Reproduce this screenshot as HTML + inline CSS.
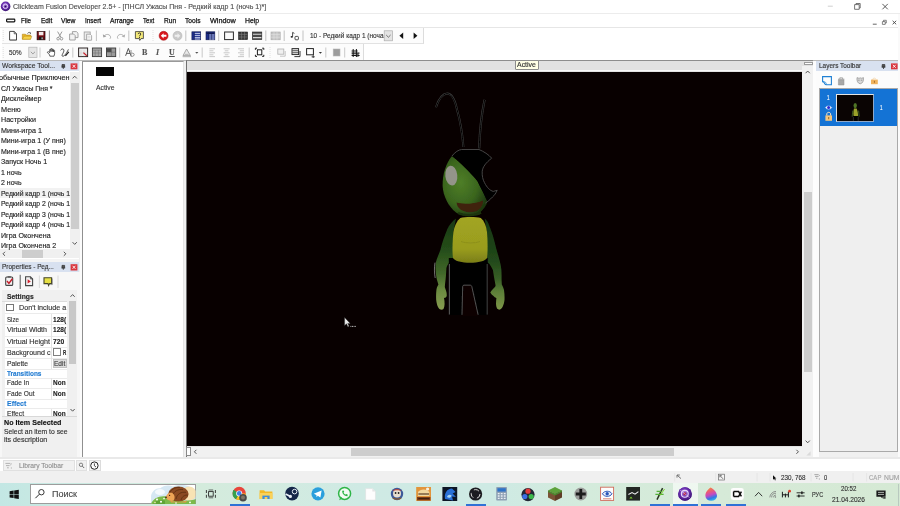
<!DOCTYPE html>
<html><head><meta charset="utf-8">
<style>
*{box-sizing:border-box;margin:0;padding:0}
html,body{width:900px;height:506px;overflow:hidden;background:#fff}
body{font-family:"Liberation Sans",sans-serif;font-size:7px;color:#222;position:relative}
.a{position:absolute}
.t{position:absolute;white-space:nowrap;transform-origin:0 50%;-webkit-text-stroke:0.14px currentColor}
#blur{position:absolute;left:0;top:0;width:900px;height:506px;filter:blur(0.4px)}
svg{position:absolute;overflow:visible}
.sep{position:absolute;width:1px;background:#c4c4c4}
</style></head><body>
<div id="blur">
<!-- ===== title / menu / toolbars ===== -->
<div class="a" style="left:0;top:0;width:900px;height:61px;background:#fff"></div>
<div class="a" style="left:0;top:13px;width:900px;height:1px;background:#ececec"></div>
<div class="a" style="left:0;top:27px;width:900px;height:1px;background:#e6e6e6"></div>
<div class="a" style="left:2px;top:28px;width:422px;height:16px;background:#fcfcfc;border-right:1px solid #dcdcdc;border-bottom:1px solid #e2e2e2"></div>
<div class="a" style="left:2px;top:44px;width:361.6px;height:16px;background:#fcfcfc;border-right:1px solid #dcdcdc"></div>
<!-- ===== main background ===== -->
<div class="a" style="left:0;top:60px;width:900px;height:399px;background:#f0f0f0"></div>
<div class="a" style="left:0;top:60px;width:900px;height:1px;background:#b9b9b9"></div>
<!-- ===== workspace panel ===== -->
<div class="a" style="left:0;top:61px;width:79px;height:198px;background:#fff"></div>
<div class="a" style="left:0;top:61px;width:79px;height:10px;background:#d8e1f0"></div>
<div class="a" style="left:79.5px;top:61px;width:2.5px;height:398px;background:#fbfbfb"></div>
<!-- ===== properties panel ===== -->
<div class="a" style="left:0;top:259px;width:79px;height:3px;background:#f4f4f4"></div>
<div class="a" style="left:0;top:262px;width:79px;height:10px;background:#d8e1f0"></div>
<div class="a" style="left:0;top:272px;width:79.5px;height:187px;background:#f7f7f7"></div>
<div class="a" style="left:2.4px;top:289.8px;width:74.6px;height:167.2px;background:#f0f0f0;border-top:0.8px solid #cfcfcf"></div>
<!-- ===== middle list ===== -->
<div class="a" style="left:82px;top:61px;width:102px;height:398px;background:#fff;border-left:1px solid #8f8f8f;border-top:1px solid #9a9a9a;border-right:1px solid #e4e4e4"></div>
<!-- ===== editor ===== -->
<div class="a" style="left:185.6px;top:60.4px;width:627.4px;height:396.4px;background:#e2e2e2;border-top:1.2px solid #8e8e8e;border-left:1px solid #707070"></div>
<div class="a" style="left:186.6px;top:70.3px;width:616px;height:1.2px;background:#f8f8f8"></div>
<div class="a" style="left:186.7px;top:71.6px;width:615.6px;height:374.9px;background:#080000"></div>
<div class="a" style="left:802.3px;top:65.5px;width:10.7px;height:381px;background:#f1f1f1"></div>
<div class="a" style="left:186.6px;top:446.5px;width:626.4px;height:10.2px;background:#f1f1f1"></div>
<!-- ===== layers panel ===== -->
<div class="a" style="left:813px;top:61px;width:3px;height:398px;background:#fdfdfd"></div>
<div class="a" style="left:816px;top:61px;width:84px;height:10px;background:#d8e1f0"></div>
<div class="a" style="left:816px;top:71px;width:84px;height:388px;background:#fcfcfc"></div>
<div class="a" style="left:818.5px;top:452px;width:81.5px;height:5px;background:#f0f0f0"></div>
<div class="a" style="left:819px;top:88px;width:79px;height:364px;background:#efefef;border:1px solid #a9a9a9"></div>
<div class="a" style="left:898px;top:14px;width:2px;height:445px;background:#fafafa"></div>
<!-- ===== bottom ===== -->
<div class="a" style="left:0;top:458px;width:900px;height:13px;background:#fff"></div>
<div class="a" style="left:0;top:471px;width:900px;height:12px;background:#f0f0f0"></div>
<div class="a" id="taskbar" style="left:0;top:483px;width:900px;height:23px;background:linear-gradient(90deg,#c3e7e4 0%,#c6e8e3 3%,#d4ebdc 22%,#d3ebe0 30%,#cfeae4 40%,#ceeae4 55%,#d4ebdc 65%,#d6ead8 80%,#d5e9d4 100%)"></div>
<!-- ===== toolbar icons ===== -->
<svg style="left:0;top:0" width="900" height="506" viewBox="0 0 900 506">
<!-- app icon -->
<defs>
<radialGradient id="gApp" cx="45%" cy="40%" r="60%"><stop offset="0" stop-color="#b58be6"/><stop offset="0.55" stop-color="#6a2fb0"/><stop offset="1" stop-color="#3a1470"/></radialGradient>
</defs>
<circle cx="5.6" cy="6.4" r="4.8" fill="url(#gApp)"/>
<circle cx="5.4" cy="6.3" r="2.3" fill="none" stroke="#e9dcf8" stroke-width="0.9"/>
<circle cx="5.4" cy="6.3" r="0.9" fill="#2a0d55"/>
<!-- window controls -->
<path d="M827.8 6.2H832.8" stroke="#c4c4c4" stroke-width="0.8"/>
<path d="M854.6 4.6V9.3H859.2V4.6Z M856 4.6V3.5H860.2V8H859.2" fill="none" stroke="#555" stroke-width="0.8"/>
<path d="M882.4 3.9L887.8 9.3M887.8 3.9L882.4 9.3" stroke="#333" stroke-width="0.8"/>
<!-- mdi controls -->
<path d="M872.8 24.2H876.7" stroke="#555" stroke-width="0.9"/>
<path d="M882.4 21.6V24.4H885.2V21.6Z M883.5 21.6V20.3H886.3V23H885.2" fill="none" stroke="#555" stroke-width="0.7"/>
<path d="M892.6 20.8L896.2 24.3M896.2 20.8L892.6 24.3" stroke="#444" stroke-width="0.9"/>
<!-- menu icon -->
<rect x="6.6" y="19.2" width="8.2" height="2.6" rx="0.7" fill="#fff" stroke="#111" stroke-width="1.2"/>
<!-- grips -->
<path d="M3.2 30V42M3.2 47V58M153 30V42M270 47V58" stroke="#cfcfcf" stroke-width="0.8" stroke-dasharray="0.8 1.2"/>
<!-- toolbar1 separators -->
<path d="M49.4 30.5V41" stroke="#8c8c8c" stroke-width="0.9"/><path d="M96.4 30.5V41M128.8 30.5V41M185.8 30.5V41M218.7 30.5V41M265.8 30.5V41M284.2 30.5V41M303 30.5V41" stroke="#b4b4b4" stroke-width="0.8"/>
<!-- new -->
<path d="M9.6 31.4H14.2L16.5 33.8V40H9.6Z" fill="#fff" stroke="#333" stroke-width="0.9"/>
<path d="M14.2 31.4V33.8H16.5" fill="none" stroke="#333" stroke-width="0.7"/>
<path d="M9.6 40.3H16.7" stroke="#777" stroke-width="0.6"/>
<!-- open -->
<path d="M22.3 34.2H25.5L26.3 35H30.6V39.2H22.3Z" fill="#e8b52a" stroke="#a87808" stroke-width="0.5"/>
<path d="M22.3 39.2L24 36.2H31.8L30.6 39.2Z" fill="#f7d34a" stroke="#a87808" stroke-width="0.4"/>
<path d="M27.5 33.6C28.2 32.2 29.8 32 30.6 33" fill="none" stroke="#333" stroke-width="0.7"/>
<path d="M30.9 32.3V33.8H29.6Z" fill="#333"/>
<!-- save -->
<rect x="37.1" y="31.6" width="7.9" height="8.2" fill="#7a0f14" stroke="#1c0406" stroke-width="0.7"/>
<rect x="38.8" y="31.9" width="4.6" height="3.4" fill="#f1e9e9"/>
<rect x="38.9" y="36.8" width="4.3" height="3" fill="#1a1a1a"/>
<rect x="41.6" y="37.4" width="1" height="1.9" fill="#e8e8e8"/>
<!-- cut -->
<g stroke="#9a9a9a" stroke-width="1" fill="none">
<path d="M57.6 31.6L61 37.4M62 31.6L58.6 37.4"/>
<circle cx="58.1" cy="38.7" r="1.3"/><circle cx="61.5" cy="38.7" r="1.3"/>
</g>
<!-- copy -->
<g stroke="#9a9a9a" stroke-width="0.9" fill="#f2f2f2">
<path d="M72.4 31.6H76.4L78 33.2V37.6H72.4Z"/>
<path d="M69.6 34H73.6L75.2 35.6V40H69.6Z"/>
</g>
<!-- paste -->
<g stroke="#a4a4a4" stroke-width="0.9" fill="#ececec">
<rect x="84.2" y="32" width="6" height="7.8"/>
<path d="M86.6 34.2H90.2L91.6 35.6V40.2H86.6Z" fill="#f8f8f8"/>
</g>
<path d="M87.6 36.4H90.4M87.6 37.8H90.4" stroke="#c2c2c2" stroke-width="0.5"/>
<!-- undo / redo -->
<g stroke="#a5a5a5" stroke-width="0.9" fill="none">
<path d="M104.2 36.2C105.6 34 109 33.6 110.4 36.4C110.8 37.4 110.4 38.4 109.8 38.8"/>
<path d="M123.8 36.2C122.4 34 119 33.6 117.6 36.4C117.2 37.4 117.6 38.4 118.2 38.8"/>
</g>
<path d="M102.8 34.2L103.4 37.6L106.4 36.6Z" fill="#a0a0a0"/>
<path d="M125.2 34.2L124.6 37.6L121.6 36.6Z" fill="#b0b0b0"/>
<!-- help -->
<path d="M135.4 31.6H143.4V38.6H141L139.8 40.4L139.4 38.6H135.4Z" fill="#f5ea7a" stroke="#333" stroke-width="0.8"/>
<path d="M138.1 34.1C138.1 32.6 140.8 32.6 140.8 34.1C140.8 35.1 139.5 35.1 139.5 36.2" fill="none" stroke="#222" stroke-width="0.9"/>
<rect x="139" y="36.9" width="1" height="0.9" fill="#222"/>
<!-- red stop / gray -->
<circle cx="163.6" cy="35.8" r="4.5" fill="#d8161c" stroke="#9c0c10" stroke-width="0.5"/>
<path d="M160.8 35.8L163.6 33.2V34.8H166.4V36.8H163.6V38.4Z" fill="#fff"/>
<circle cx="177.5" cy="35.8" r="4.5" fill="#c9c9c9" stroke="#b0b0b0" stroke-width="0.5"/>
<path d="M180.3 35.8L177.5 33.2V34.8H174.7V36.8H177.5V38.4Z" fill="#eee"/>
<!-- blue grids -->
<rect x="191.9" y="31.8" width="8.8" height="8" fill="#1e2f8c" stroke="#111a50" stroke-width="0.6"/>
<path d="M194.6 33.4H200.2M194.6 35.4H200.2M194.6 37.4H200.2M194.6 39H200.2" stroke="#d4dbf5" stroke-width="0.9"/>
<path d="M194.3 32V39.8" stroke="#0d1440" stroke-width="0.5"/>
<rect x="206" y="31.8" width="8.8" height="8" fill="#1e2f8c" stroke="#111a50" stroke-width="0.6"/>
<path d="M206.4 33.2H214.4" stroke="#10184a" stroke-width="1.4"/>
<path d="M209 35H214.4M209 37H214.4M209 39H214.4" stroke="#c9d1f0" stroke-width="0.9"/>
<path d="M208.8 32V39.8M211.6 33.8V39.8" stroke="#0d1440" stroke-width="0.5"/>
<!-- frame / storyboard / event icons -->
<rect x="224.6" y="32" width="8.8" height="7.6" fill="#fafafa" stroke="#2b2b2b" stroke-width="1"/>
<rect x="238.6" y="32" width="9" height="7.6" fill="#3a3a3a" stroke="#222" stroke-width="0.6"/>
<path d="M238.8 34.4H247.4M238.8 37H247.4M241.6 32V39.6M244.6 32V39.6" stroke="#8a8a8a" stroke-width="0.5"/>
<rect x="252.4" y="32" width="9.4" height="7.6" fill="#4a4a4a" stroke="#222" stroke-width="0.6"/>
<path d="M253 34.2H261.4M253 37.6H261.4" stroke="#d8d8d8" stroke-width="1.1"/>
<rect x="271" y="32" width="9.2" height="7.8" fill="#c6c6c6" stroke="#a8a8a8" stroke-width="0.6"/>
<path d="M271 34.6H280M271 37.2H280M274 32V39.8M277 32V39.8" stroke="#e6e6e6" stroke-width="0.5"/>
<!-- notes -->
<path d="M292.6 32.4V36.6" stroke="#222" stroke-width="0.8"/>
<path d="M292.6 32.4L294.4 33.4" stroke="#222" stroke-width="0.8"/>
<ellipse cx="291.8" cy="36.8" rx="1.2" ry="0.9" fill="#222"/>
<rect x="295" y="36.4" width="3.4" height="3.4" rx="0.8" fill="#fff" stroke="#222" stroke-width="0.8"/>
<!-- combo -->
<rect x="384.2" y="30.8" width="8.4" height="10" fill="#e4e4e4" stroke="#adadad" stroke-width="0.7"/>
<path d="M386.2 35L388.4 37.2L390.6 35" fill="none" stroke="#555" stroke-width="0.8"/>
<path d="M403.2 32.6V39L399.4 35.8Z" fill="#111"/>
<path d="M413.6 32.6V39L417.4 35.8Z" fill="#111"/>
<!-- ===== toolbar 2 ===== -->
<path d="M40 47.5V57.5M72.8 47.5V57.5M119.7 47.5V57.5M202.2 47.5V57.5M249.2 47.5V57.5M325.8 47.5V57.5M344.7 47.5V57.5" stroke="#bdbdbd" stroke-width="0.8"/>
<rect x="28.8" y="47.2" width="8.2" height="10.4" fill="#e6e6e6" stroke="#b4b4b4" stroke-width="0.7"/>
<path d="M30.8 51.8L32.9 53.9L35 51.8" fill="none" stroke="#8a8a8a" stroke-width="0.8"/>
<!-- hand -->
<path d="M49.9 56.2L49.5 54.6L47.5 52.8C47.1 52 47.9 51.3 48.6 51.8L49.7 52.8V49.8C49.7 48.9 50.9 48.9 50.9 49.8V51.6V49.2C50.9 48.3 52.2 48.3 52.2 49.2V51.6V49.6C52.2 48.8 53.4 48.8 53.4 49.6V51.9V50.6C53.4 49.9 54.6 49.9 54.6 50.6V53.8L54 56.2Z" fill="#fff" stroke="#2c2c2c" stroke-width="0.75" stroke-linejoin="round"/>
<!-- curve pen -->
<path d="M60.6 50.4C61.6 48.2 64.4 48.6 63.8 51.2C63.2 53.6 61 55.6 62.6 56.2C64.2 56.6 66.4 53.6 68.4 49.4" fill="none" stroke="#222" stroke-width="0.8"/>
<path d="M65.4 55.8L68.8 51.8" stroke="#222" stroke-width="1.2"/>
<!-- frame-ish icons -->
<rect x="78.6" y="48" width="9" height="8.6" fill="#ececec" stroke="#2f2626" stroke-width="1"/>
<path d="M81 50V56.4M84 50V56.4M79 53H87.4" stroke="#c9c9c9" stroke-width="0.5"/>
<path d="M83.4 52.6L86.8 55.8" stroke="#c8202a" stroke-width="1.3"/>
<rect x="92.4" y="48" width="9.2" height="8.6" fill="#a9a9a9" stroke="#3a3a3a" stroke-width="0.9"/>
<path d="M92.6 50.2H101.4M92.6 53H101.4M95.2 50V56.4M98.4 50V56.4" stroke="#6a6a6a" stroke-width="0.5"/>
<rect x="106.5" y="48" width="9.2" height="8.6" fill="#9a9a9a" stroke="#3a3a3a" stroke-width="0.9"/>
<rect x="107" y="48.4" width="4.4" height="3.6" fill="#4a4a4a"/>
<path d="M106.8 52.2H115.4M111.4 48.2V56.4" stroke="#5a5a5a" stroke-width="0.5"/>
<!-- font A -->
<path d="M125.6 55.8L128.4 48.4L131 55.8M126.6 53.4H130" fill="none" stroke="#555" stroke-width="1"/>
<path d="M131 50V56.4C131 56.4 134.2 56.8 134.2 54.6C134.2 52.8 131.4 53.2 131.4 53.2" fill="none" stroke="#777" stroke-width="0.8"/>
<!-- color -->
<path d="M183 55.6L186.6 49L190.4 55.6Z" fill="#e9e9e9" stroke="#8a8a8a" stroke-width="0.7"/>
<path d="M184.8 54.4H188.6" stroke="#aaa" stroke-width="0.8"/>
<rect x="182.6" y="56" width="8.4" height="1.2" fill="#bbb"/>
<path d="M195.2 52L196.8 53.8L198.4 52Z" fill="#555"/>
<!-- align -->
<g stroke="#c2c2c2" stroke-width="0.9">
<path d="M209.4 48.8H215M209.4 50.8H213.4M209.4 52.8H215M209.4 54.8H213.4M209.4 56.6H215"/>
<path d="M223.6 48.8H229.6M224.8 50.8H228.4M223.6 52.8H229.6M224.8 54.8H228.4M223.6 56.6H229.6"/>
<path d="M238 48.8H244M239.8 50.8H244M238 52.8H244M239.8 54.8H244M238 56.6H244"/>
</g>
<!-- center frame -->
<rect x="257.4" y="49.8" width="4.4" height="5" fill="none" stroke="#1c1c1c" stroke-width="1"/>
<path d="M255.4 48.2H257M255.4 48.2V49.8M263.8 48.2H262.2M263.8 48.2V49.8M255.4 56.4H257M255.4 56.4V54.8M263.8 56.4H262.2M263.8 56.4V54.8" stroke="#1c1c1c" stroke-width="1" fill="none"/>
<!-- gray icon -->
<rect x="277.8" y="49" width="6" height="5.2" fill="#f0f0f0" stroke="#b0b0b0" stroke-width="0.8"/>
<path d="M280 56.2H285.2V51" fill="none" stroke="#b8b8b8" stroke-width="0.8"/>
<!-- dark icon -->
<rect x="292" y="48.6" width="6.6" height="6" fill="#d8d8d8" stroke="#222" stroke-width="0.9"/>
<path d="M292.4 50.6H298.4M292.4 52.6H298.4" stroke="#222" stroke-width="0.6"/>
<path d="M294.4 56.6H300V51" fill="none" stroke="#222" stroke-width="0.9"/>
<!-- rect icon with dropdown -->
<rect x="306.6" y="48.6" width="6.8" height="6.2" fill="#fff" stroke="#222" stroke-width="1"/>
<path d="M311.6 56.8H314.8M313.2 55.2V58" stroke="#222" stroke-width="0.8"/>
<path d="M318.8 52L320.4 53.8L322 52Z" fill="#333"/>
<!-- gray square -->
<rect x="333.2" y="49" width="6.8" height="7" fill="#9c9c9c" stroke="#b5b5b5" stroke-width="0.6"/>
<!-- dark icon last -->
<path d="M351.6 51H357.6M351.6 53.2H359.4M351.6 55.4H357.6" stroke="#161616" stroke-width="1.2"/>
<path d="M353.2 49V57M356.4 49V57" stroke="#161616" stroke-width="1"/>
<path d="M357.4 53.8L360 55.4L357.4 57Z" fill="#161616"/>
</svg>
<div class="t" style="left:142px;top:46.5px;font:bold 8px/12px 'Liberation Serif',serif;color:#555;transform:scaleX(1.001)">B</div>
<div class="t" style="left:156.4px;top:46.5px;font:italic bold 8px/12px 'Liberation Serif',serif;color:#555;transform:scaleX(1.001)">I</div>
<div class="t" style="left:169.4px;top:46.5px;font:bold 8px/12px 'Liberation Serif',serif;color:#555;text-decoration:underline;transform:scaleX(1.001)">U</div>
<!-- ===== workspace panel details ===== -->
<div class="a" style="left:70.4px;top:72px;width:8.6px;height:177px;background:#f0f0f0"></div>
<div class="a" style="left:71px;top:82.5px;width:7.6px;height:146.5px;background:#cdcdcd"></div>
<div class="a" style="left:0;top:249.3px;width:70.4px;height:9px;background:#f0f0f0"></div>
<div class="a" style="left:70.4px;top:249.3px;width:8.6px;height:9px;background:#f0f0f0"></div>
<div class="a" style="left:21.5px;top:250px;width:21.5px;height:7.6px;background:#cdcdcd"></div>
<!-- selected row highlight (subtle) -->
<div class="a" style="left:0;top:188px;width:70.4px;height:10px;background:#f2f2f2"></div>
<svg style="left:0;top:0" width="900" height="506" viewBox="0 0 900 506">
<!-- ws title pin/close -->
<path d="M62 64.6H64.6V67H62Z M61.4 67.2H65.2 M63.3 67.2V69" stroke="#333" stroke-width="0.8" fill="#555"/>
<rect x="70.6" y="63.4" width="6.8" height="5.9" fill="#d9363e"/>
<path d="M72.6 64.8L75.4 67.8M75.4 64.8L72.6 67.8" stroke="#fff" stroke-width="0.9"/>
<!-- ws scroll arrows -->
<path d="M72.6 78.4L74.7 76.2L76.8 78.4" fill="none" stroke="#444" stroke-width="0.9"/>
<path d="M72.6 242.2L74.7 244.4L76.8 242.2" fill="none" stroke="#444" stroke-width="0.9"/>
<path d="M5 251.8L3 253.8L5 255.8" fill="none" stroke="#444" stroke-width="0.9"/>
<path d="M63.8 251.8L65.8 253.8L63.8 255.8" fill="none" stroke="#444" stroke-width="0.9"/>
<!-- props title pin/close -->
<path d="M62 265.4H64.6V267.8H62Z M61.4 268H65.2 M63.3 268V269.8" stroke="#333" stroke-width="0.8" fill="#555"/>
<rect x="70.6" y="264.2" width="6.8" height="6.3" fill="#d9363e"/>
<path d="M72.6 265.8L75.4 268.8M75.4 265.8L72.6 268.8" stroke="#fff" stroke-width="0.9"/>
<!-- props icons -->
<path d="M20.2 274.8V289" stroke="#5a5a5a" stroke-width="1"/>
<path d="M39.4 275.5V288M58 275.5V288" stroke="#d2d2d2" stroke-width="0.8"/>
<rect x="5.7" y="277" width="7" height="8.4" rx="1" fill="#f3f3f3" stroke="#444" stroke-width="1.1"/>
<rect x="7.6" y="276.2" width="3.2" height="1.4" fill="#555"/>
<path d="M7 281L8.9 283.4L12.4 278.8" fill="none" stroke="#c51e2a" stroke-width="1.5"/>
<path d="M25.6 276.8H30.4L32.6 279V285.6H25.6Z" fill="#f4f4f4" stroke="#444" stroke-width="1.1"/>
<path d="M30.4 276.8V279H32.6" fill="none" stroke="#444" stroke-width="0.7"/>
<path d="M27.6 279.2V283.6L30.8 281.4Z" fill="#d2202c"/>
<path d="M44 277.8H51.6V283.6H49.6L48.6 285.6L48 283.6H44Z" fill="#e6e044" stroke="#45452a" stroke-width="1.1"/>
<path d="M52.4 278.5V284.6H50.4" fill="none" stroke="#777" stroke-width="0.6"/>
</svg>
<!-- ===== property grid ===== -->
<div class="a" style="left:2.4px;top:290.4px;width:64.6px;height:125.3px;background:#fff"></div>
<div class="a" style="left:2.4px;top:290.4px;width:64.6px;height:10.8px;background:#f0f0f0"></div>
<div class="a" style="left:2.4px;top:301.2px;width:2.6px;height:114.5px;background:#f0f0f0"></div>
<!-- row lines -->
<div class="a" style="left:2.4px;top:301.2px;width:64.6px;height:0.8px;background:#dcdcdc"></div>
<div class="a" style="left:5px;top:313.2px;width:62px;height:0.8px;background:#ebebeb"></div>
<div class="a" style="left:5px;top:324.4px;width:62px;height:0.8px;background:#ebebeb"></div>
<div class="a" style="left:5px;top:335.5px;width:62px;height:0.8px;background:#ebebeb"></div>
<div class="a" style="left:5px;top:346.6px;width:62px;height:0.8px;background:#ebebeb"></div>
<div class="a" style="left:5px;top:357.6px;width:62px;height:0.8px;background:#ebebeb"></div>
<div class="a" style="left:5px;top:368.6px;width:62px;height:0.8px;background:#ebebeb"></div>
<div class="a" style="left:5px;top:377.6px;width:62px;height:0.8px;background:#ebebeb"></div>
<div class="a" style="left:5px;top:388.3px;width:62px;height:0.8px;background:#ebebeb"></div>
<div class="a" style="left:5px;top:399.2px;width:62px;height:0.8px;background:#ebebeb"></div>
<div class="a" style="left:5px;top:408.4px;width:62px;height:0.8px;background:#ebebeb"></div>
<!-- column divider -->
<div class="a" style="left:51px;top:313.6px;width:0.8px;height:55px;background:#e4e4e4"></div>
<div class="a" style="left:51px;top:378px;width:0.8px;height:21.5px;background:#e4e4e4"></div>
<div class="a" style="left:51px;top:408.8px;width:0.8px;height:7px;background:#e4e4e4"></div>
<!-- checkbox / color box / edit button -->
<div class="a" style="left:6.3px;top:303.9px;width:7.4px;height:7.5px;background:#fff;border:0.8px solid #777"></div>
<div class="a" style="left:53.3px;top:347.8px;width:7.4px;height:8.2px;background:#fff;border:0.8px solid #808080"></div>
<div class="a" style="left:53px;top:358.6px;width:14px;height:9.8px;background:#dcdcdc;border:0.6px solid #c2c2c2"></div>
<!-- props scrollbar -->
<div class="a" style="left:67px;top:290.4px;width:10px;height:125.3px;background:#f0f0f0"></div>
<div class="a" style="left:68.8px;top:301px;width:7.5px;height:62.5px;background:#c8c8c8"></div>
<svg style="left:0;top:0" width="900" height="506" viewBox="0 0 900 506">
<path d="M70.5 296.8L72.6 294.6L74.7 296.8" fill="none" stroke="#444" stroke-width="0.9"/>
<path d="M70.5 409L72.6 411.2L74.7 409" fill="none" stroke="#444" stroke-width="0.9"/>
</svg>
<!-- description separator -->
<div class="a" style="left:2.4px;top:415.7px;width:75px;height:0.8px;background:#d8d8d8"></div>
<!-- ===== mid list ===== -->
<div class="a" style="left:95.5px;top:67px;width:18.5px;height:9.2px;background:#050505"></div>
<!-- ===== editor scrollbars ===== -->
<div class="a" style="left:803.8px;top:61.6px;width:9px;height:3.6px;background:#fdfdfd;border:0.8px solid #9c9c9c"></div>
<div class="a" style="left:804.2px;top:192px;width:7.8px;height:180px;background:#cdcdcd"></div>
<div class="a" style="left:186.3px;top:447.2px;width:4.5px;height:9.3px;background:#fdfdfd;border:0.8px solid #8a8a8a"></div>
<div class="a" style="left:351px;top:448.4px;width:323px;height:7.6px;background:#cdcdcd"></div>
<!-- tooltip -->
<div class="a" style="left:515.4px;top:59.6px;width:23.2px;height:10.4px;background:#ffffe6;border:0.8px solid #8c8c8c;border-radius:1px"></div>
<svg style="left:0;top:0" width="900" height="506" viewBox="0 0 900 506">
<path d="M805.6 73.2L807.7 71L809.8 73.2" fill="none" stroke="#444" stroke-width="0.9"/>
<path d="M805.6 440.6L807.7 442.8L809.8 440.6" fill="none" stroke="#444" stroke-width="0.9"/>
<path d="M196.4 449.8L194.4 451.8L196.4 453.8" fill="none" stroke="#444" stroke-width="0.9"/>
<path d="M796.4 449.8L798.4 451.8L796.4 453.8" fill="none" stroke="#444" stroke-width="0.9"/>
<path d="M810.6 451.2V455.4H806.4Z" fill="#dadada"/>
<!-- mouse cursor in canvas -->
<path d="M344.6 317.4V325.6L346.5 323.8L347.9 326.8L349.1 326.2L347.7 323.4H350.2Z" fill="#eaeaea" stroke="#2a2a2a" stroke-width="0.4"/>
<path d="M350.4 326.4H356" stroke="#cfcfcf" stroke-width="0.9" stroke-dasharray="1 0.6"/>
</svg>
<!-- ===== character ===== -->
<svg style="left:0;top:0" width="900" height="506" viewBox="0 0 900 506">
<defs>
<filter id="fbc" x="-10%" y="-10%" width="120%" height="120%"><feGaussianBlur stdDeviation="0.7"/></filter>
<filter id="fbs" x="-10%" y="-10%" width="120%" height="120%"><feGaussianBlur stdDeviation="0.5"/></filter>
<radialGradient id="gHead" cx="40%" cy="45%" r="65%"><stop offset="0" stop-color="#4f7e27"/><stop offset="0.6" stop-color="#3a651e"/><stop offset="1" stop-color="#1e3810"/></radialGradient>
<linearGradient id="gTorso" x1="0" y1="0" x2="0" y2="1"><stop offset="0" stop-color="#a2a522"/><stop offset="0.7" stop-color="#999c1e"/><stop offset="1" stop-color="#7a7e18"/></linearGradient>
<linearGradient id="gArmR" x1="0" y1="0" x2="0" y2="1"><stop offset="0" stop-color="#163613"/><stop offset="0.45" stop-color="#21481a"/><stop offset="0.66" stop-color="#385e26"/><stop offset="0.8" stop-color="#5c7e38"/><stop offset="1" stop-color="#7e9648"/></linearGradient>
<linearGradient id="gArmL" x1="0" y1="0" x2="0" y2="1"><stop offset="0" stop-color="#183a14"/><stop offset="0.35" stop-color="#264e1a"/><stop offset="0.6" stop-color="#42682a"/><stop offset="0.78" stop-color="#6a8a40"/><stop offset="1" stop-color="#879c50"/></linearGradient>
</defs>
<!-- antennae (gray outline, black core) -->
<g filter="url(#fbs)" fill="none">
<path d="M463.4 147C462.6 136 460 120 457 109.5C455 100 451.4 93.6 447.2 93.6C442.6 93.8 438.4 100 436 107.2" stroke="#3e3e3e" stroke-width="2"/>
<path d="M463.4 147C462.6 136 460 120 457 109.5C455 100 451.4 93.6 447.2 93.6C442.6 93.8 438.4 100 436 107.2" stroke="#030303" stroke-width="1"/>
<path d="M479.2 148.4C479.6 134 481.4 115 484.6 99.8" stroke="#3c3c3c" stroke-width="2.2"/>
<path d="M479.2 148.4C479.6 134 481.4 115 484.6 99.8" stroke="#030303" stroke-width="1"/>
</g>
<g filter="url(#fbc)">
<!-- arms (behind torso) -->
<path d="M456 218.6C452 221.4 449.6 224.8 447.5 228.7C444.4 236 442 243 440.4 250C438.6 254.6 436.8 258.6 436 262C435.4 265 435.4 267.6 435.6 270C435.8 274 436.4 277.4 437 280L438.4 284.5C437.2 286.4 436.6 288.2 436.4 290C436 294 436 297.2 436.2 300C436.6 303 437.2 305.4 438 307C438.8 308.6 439.6 309.4 440.5 309.6C441.8 309.8 442.8 309.6 443.5 309C444.2 307.4 444.6 305.6 444.6 304C444.6 301.8 444.4 299.8 444 298C445.4 298 446.4 297.2 446.7 296C446.8 294.6 446.7 293.2 446.4 292C445.8 290 445.2 288.4 444.8 287L445 284.5C445.4 281 445.8 278 446 275L446.4 268C447 266 447.8 264.2 449 263L452.4 262L453.4 262V232Z" fill="url(#gArmL)"/>
<path d="M484.6 218.6C486.6 220.2 488.2 222.4 489 225C492 232 494.4 240 496 247.7C497.6 253 499 258 500 262C500.8 265 501.2 267.6 501.4 270C501.6 274 501.6 277.4 501.6 280L501.8 284.5C502.8 286.4 503.6 288.2 504 290C504.6 294 504.6 297.2 504.5 300C504.2 302.6 503.6 304.6 503 306C502.2 307.8 501.2 309 500 309.6C498.8 309.8 497.8 309.4 497 308.6C496.4 307 496 305.4 496 304C496 301.8 496.2 299.8 496.4 298C495.2 297.6 494.2 297 493.5 296C492.2 295 491 293.8 490.3 292.4C491.2 291 492 289.8 493 289C494 288 495 287 495.6 286L495.4 284.5C495 282 494.4 279.4 494 277L492.9 270C491.8 267.6 490.6 265.6 489.5 264L487 262V232Z" fill="url(#gArmR)"/>
<!-- faint sliver on left arm -->
<path d="M435 262.6C434.2 267 434.2 273 435.2 278" stroke="#7a7a7a" stroke-width="0.9" fill="none"/>
<!-- legs: black with gray edges -->
<path d="M448.8 258H487.8V315H448.8Z" fill="#030303"/>
<path d="M449.4 264V314.6" stroke="#565656" stroke-width="1.1"/>
<path d="M487.2 264V314.6" stroke="#404040" stroke-width="1"/>
<path d="M462 316L462.7 286.4Q462.9 285.2 464 285.2H470.4Q471.4 285.3 471.8 286.6L478.1 316Z" fill="#080000"/><path d="M462 314.8L462.7 286.4Q462.9 285.2 464 285.2H470.4Q471.4 285.3 471.8 286.6L478.1 314.8" fill="none" stroke="#5a5a5a" stroke-width="0.9"/>
<!-- torso -->
<path d="M460.4 218C465 216.6 476 216.6 480.8 218C484.4 221 486.4 226 487 232C487.8 242 487.8 252 487 258C484 264.4 456 264.4 453 258C452.2 252 452.4 242 453.4 232C454.4 226 456.6 221 460.4 218Z" fill="url(#gTorso)"/>
<path d="M461 241.6C466 243.4 475 243.4 480 241.6" stroke="#8b8f17" stroke-width="0.9" fill="none"/>
<!-- head -->
<path d="M452 156C446 163 442.4 174 442.6 186C443.2 196 448 206 456 212.6C460 215.4 476 215.6 480 212.6C484 209 486.6 205 487.4 201.6C485 196 481 188 477.4 181C470 172 460 162 452 156Z" fill="url(#gHead)"/>
<!-- black part of head (cap + right side with bite) -->
<path d="M452 156C455 152 458.6 149.8 461.6 149.5H479C484 151.6 488.6 154.6 491.7 158.2C485.6 163 482.6 167 482.2 171.6C482 176 482.8 179.6 484.5 182.7C487 187.6 490 190.6 493.2 191.4L497.2 190.3C496 193 494.4 195.4 492.5 197C490 199.6 487.6 201.8 485.3 203.2L487.4 201.6C485 196 481 188 477.4 181C470 172 460 162 452 156Z" fill="#040303"/>
<!-- mouth -->
<path d="M456.6 202.6C462 204.6 476 204 483 200.4C483 208.4 476.4 212.4 469.4 212.2C462.4 212 457 208.6 456.6 202.6Z" fill="#40200e"/>
<path d="M458 213C464 216 476 216 481 212.6" stroke="#1c3410" stroke-width="2.4" fill="none"/>
<!-- eye -->
<ellipse cx="451.3" cy="175.6" rx="6" ry="10" fill="#94948a" transform="rotate(-6 451.3 175.6)"/>
</g>
<!-- gray highlight along silhouette of black part -->
<g filter="url(#fbs)" fill="none" stroke="#4c4c4c" stroke-width="0.9">
<path d="M452 156C455 152 458.6 149.8 461.6 149.5H479C484 151.6 488.6 154.6 491.7 158.2C485.6 163 482.6 167 482.2 171.6C482 176 482.8 179.6 484.5 182.7C487 187.6 490 190.6 493.2 191.4L497.2 190.3C496 193 494.4 195.4 492.5 197C490 199.6 487.6 201.8 485.3 203.2"/>
</g>
</svg>
<!-- ===== layers panel ===== -->
<div class="a" style="left:820.4px;top:89px;width:77.1px;height:37.4px;background:#1473d5"></div>
<div class="a" style="left:836.2px;top:94.4px;width:38px;height:28px;background:#0a0403;border:0.9px solid #e4e4e4;border-right-color:#8fa8c8;border-bottom-color:#8fa8c8"></div>
<svg style="left:0;top:0" width="900" height="506" viewBox="0 0 900 506">
<path d="M882.2 64.6H884.8V67H882.2Z M881.6 67.2H885.4 M883.5 67.2V69" stroke="#333" stroke-width="0.8" fill="#555"/>
<rect x="891" y="63.4" width="6.6" height="5.9" fill="#d9363e"/>
<path d="M892.9 64.8L895.7 67.8M895.7 64.8L892.9 67.8" stroke="#fff" stroke-width="0.9"/>
<!-- new layer -->
<path d="M822.6 76.6H831.4V84.8H826.4C824 84.8 825 81.6 822.6 81.6Z" fill="#fdfdfd" stroke="#1f80d4" stroke-width="1.1"/>
<path d="M822.6 81.6C825.4 81.6 826.4 82.4 826.4 84.8" fill="none" stroke="#2f8fdc" stroke-width="0.8"/>
<!-- trash -->
<path d="M838 79.2H844.4M839.8 79.2V77.8H842.6V79.2" fill="none" stroke="#9a9a9a" stroke-width="0.8"/>
<path d="M838.4 79.8H844V85H838.4Z" fill="#a8a8a8" stroke="#909090" stroke-width="0.5"/>
<!-- mask -->
<path d="M857 77.6C858.6 78.4 859.4 78.4 860.2 77.8C861 78.4 861.8 78.4 863.4 77.6C863.8 81 862.6 83.4 860.2 83.8C857.8 83.4 856.6 81 857 77.6Z" fill="#d9d9d9" stroke="#8c8c8c" stroke-width="0.7"/>
<path d="M858.2 80.2H859.6M860.8 80.2H862.2" stroke="#777" stroke-width="0.7"/>
<!-- lock orange -->
<path d="M872.8 80V79.2C872.8 77.8 875.8 77.8 875.8 79.2" fill="none" stroke="#f0d5ae" stroke-width="0.8"/>
<rect x="871" y="79.6" width="6.8" height="4.6" fill="#f2b35c"/>
<rect x="873.9" y="80.8" width="1" height="2" fill="#a8702a"/>
<!-- layer: eye + lock -->
<path d="M825.4 107.6C826.8 105.4 830.4 105.4 831.8 107.6C830.4 109.8 826.8 109.8 825.4 107.6Z" fill="#f4f4ff" stroke="#dfe6ff" stroke-width="0.4"/>
<circle cx="828.6" cy="107.6" r="1.5" fill="#2b2bd0"/>
<path d="M826.8 115.6V114C826.8 111.8 830.6 111.8 830.6 114V115.6" fill="none" stroke="#f4e6c8" stroke-width="1"/>
<rect x="825.4" y="115.4" width="6.6" height="5.4" fill="#f3c680"/>
<rect x="828.2" y="117" width="1" height="2.2" fill="#9a6a20"/>
<!-- layer thumbnail content -->
<g filter="url(#fb1)">
<ellipse cx="855.2" cy="105.6" rx="1.7" ry="2.6" fill="#4f7426"/>
<path d="M854 108.4C853.4 110.6 853.2 113.4 853.6 116H858C858.2 113.4 857.6 110.6 856.6 108.4Z" fill="#9aa22a"/>
<path d="M852.8 110.6L852.2 116.6M858.6 110.6L859.2 116.6" stroke="#3f6424" stroke-width="0.9"/>
<path d="M853.6 116H858V121H853.6Z" fill="#050505"/>
<path d="M853.4 117V121M858.2 117V121" stroke="#4a4a4a" stroke-width="0.5"/>
</g>
<defs><filter id="fb1"><feGaussianBlur stdDeviation="0.35"/></filter></defs>
</svg>
<!-- ===== library bar / status bar ===== -->
<div class="a" style="left:0;top:457.4px;width:900px;height:1.2px;background:#e9e9e9"></div>
<div class="a" style="left:2.6px;top:459.8px;width:72px;height:11.2px;background:#f1f1f1;border:0.6px solid #e0e0e0"></div>
<div class="a" style="left:76.4px;top:459.8px;width:11px;height:11.2px;background:#f1f1f1;border:0.6px solid #e0e0e0"></div>
<div class="a" style="left:88.6px;top:459.8px;width:12px;height:11.2px;background:#f6f6f6;border:0.6px solid #dcdcdc"></div>
<svg style="left:0;top:0" width="900" height="506" viewBox="0 0 900 506">
<path d="M5.4 463.4H10.4M6 465.6H9.6M7 467.8H8.8M10.2 465.2L11.8 463.6M10.8 468H12" stroke="#9a9a9a" stroke-width="0.7" fill="none"/>
<circle cx="81" cy="464.8" r="1.7" fill="none" stroke="#666" stroke-width="0.8"/>
<path d="M82.3 466.1L84.2 468" stroke="#666" stroke-width="1"/>
<circle cx="94.4" cy="465.6" r="3.7" fill="#fdfdfd" stroke="#222" stroke-width="1"/>
<path d="M94.4 463.4V465.8L96 467" fill="none" stroke="#222" stroke-width="0.8"/>
<!-- status separators -->
<path d="M674.7 473V481.5M715.7 473V481.5M757 473V481.5M770 473V481.5M811 473V481.5M853 473V481.5M866.6 473V481.5" stroke="#e2e2e2" stroke-width="0.8"/>
<path d="M677.4 475.4L681 478.6" stroke="#555" stroke-width="0.8"/><path d="M677 477.6V475H679.8" stroke="#555" stroke-width="0.8" fill="none"/>
<rect x="718.6" y="474.2" width="5.8" height="5.8" fill="#f4f4f4" stroke="#6a6a6a" stroke-width="0.7"/>
<path d="M720 475.6L723 478.8" stroke="#555" stroke-width="0.8"/><path d="M719.8 477.4V475.4H721.8" stroke="#555" stroke-width="0.7" fill="none"/>
<path d="M773 475.2V479.8L774.2 478.8L775 480.4L775.8 480L775 478.4H776.4Z" fill="#111"/>
<path d="M814.4 474.6H818.6M815 476.4H818M816 478.2H817.4M818.4 476.4L819.8 475.2M818.8 479H820" stroke="#8a8a8a" stroke-width="0.7" fill="none"/>
</svg>
<!-- ===== taskbar ===== -->
<div class="a" style="left:29.5px;top:484px;width:166.5px;height:20.4px;background:#fff;border:0.8px solid #9c9c9c"></div>
<div class="a" style="left:673px;top:483px;width:24.5px;height:23px;background:rgba(255,255,255,0.6)"></div>
<!-- running indicators -->
<div class="a" style="left:229.5px;top:504px;width:20.5px;height:2px;background:#2f72d6"></div>
<div class="a" style="left:465.5px;top:504px;width:20.5px;height:2px;background:#2f72d6"></div>
<div class="a" style="left:649.5px;top:504px;width:20px;height:2px;background:#2f72d6"></div>
<div class="a" style="left:673px;top:504px;width:24.5px;height:2px;background:#2f72d6"></div>
<div class="a" style="left:701px;top:504px;width:20px;height:2px;background:#2f72d6"></div>
<div class="a" style="left:726px;top:504px;width:20px;height:2px;background:#2f72d6"></div>
<div class="a" style="left:897.6px;top:484px;width:0.8px;height:22px;background:#b9c9bf"></div>
<svg style="left:0;top:0" width="900" height="506" viewBox="0 0 900 506">
<defs>
<filter id="fbt" x="-10%" y="-10%" width="120%" height="120%"><feGaussianBlur stdDeviation="0.45"/></filter>
<clipPath id="cpHog"><rect x="151" y="484.6" width="44.6" height="19.4"/></clipPath>
<linearGradient id="gDrop" x1="0.3" y1="0" x2="0.6" y2="1"><stop offset="0" stop-color="#f28c3a"/><stop offset="0.3" stop-color="#ea5a78"/><stop offset="0.55" stop-color="#c44ac0"/><stop offset="0.8" stop-color="#2f7ae6"/><stop offset="1" stop-color="#35b6e8"/></linearGradient>
</defs>
<!-- start -->
<path d="M9.6 491.2L13.6 490.6V494H9.6ZM14.2 490.5L18.8 489.8V494H14.2ZM9.6 494.6H13.6V498L9.6 497.4ZM14.2 494.6H18.8V498.9L14.2 498.2Z" fill="#111"/>
<!-- search icon -->
<circle cx="41.4" cy="492.2" r="2.7" fill="none" stroke="#222" stroke-width="0.9"/>
<path d="M39.4 494.2L35.4 498.2" stroke="#222" stroke-width="1"/>
<!-- hedgehog picture -->
<g clip-path="url(#cpHog)" filter="url(#fbt)">
<path d="M151 504V496C152 491 156 488 160 488.4C163 485.4 169 484.6 173 486.4C178 484.4 186 484.6 190 487C194 488 196 491 196 494V504Z" fill="#d6e8f3"/>
<ellipse cx="189" cy="493.6" rx="7.5" ry="7" fill="#f8e3b4"/>
<ellipse cx="160" cy="492" rx="5" ry="3" fill="#f4f9fc"/>
<path d="M151 504C153 498.6 159 495.4 166 496.4C172 497 178 500 184 500.6C189 500.6 193 500 196 499V504Z" fill="#7cba48"/>
<path d="M153 504C155 500.6 160 499 165 500.4V504Z" fill="#5fa436"/>
<ellipse cx="178.4" cy="494" rx="10.2" ry="7.4" fill="#8a4a20"/>
<path d="M170 492C172 488.6 176 487 180 487.4M172 496C174 491 178 489 183 489.6M176 499C177 494 181 491.6 186 492.4M181 500C182 496.4 185 494.6 188 495.2" stroke="#5a2c10" stroke-width="0.8" fill="none"/>
<path d="M165.8 497.6C166.4 494 169.4 492 172.4 493C174.6 494.6 175.4 498 173.6 500.4C171 501.6 167 500.6 165.8 497.6Z" fill="#eda456"/>
<path d="M170 500.4C174 502 182 502.2 187 500.4L186 502.6H171Z" fill="#e09a48"/>
<circle cx="166" cy="497.4" r="0.8" fill="#3a2010"/>
<circle cx="169.6" cy="495.4" r="0.6" fill="#3a2010"/>
<circle cx="157" cy="499.6" r="1" fill="#fff"/><circle cx="161" cy="501.8" r="1" fill="#fff"/><circle cx="155" cy="502.6" r="0.8" fill="#f4f0b0"/><circle cx="164" cy="498.6" r="0.8" fill="#fff"/><circle cx="176" cy="503" r="0.8" fill="#fff"/><circle cx="190" cy="502.4" r="0.9" fill="#fff"/>
</g>
<!-- task view -->
<g fill="none" stroke="#2a2a2a" stroke-width="0.9">
<rect x="208.6" y="491.6" width="4.6" height="4.6"/>
<path d="M206.4 490V497.8M215.4 490V497.8" stroke-dasharray="3 1.8"/>
<path d="M208.6 490H213.2M208.6 497.8H213.2" stroke-width="0.7"/>
</g>
<g filter="url(#fbt)">
<!-- chrome -->
<circle cx="239.2" cy="493.4" r="6.6" fill="#e8443a"/>
<path d="M239.2 493.4L233.5 490.1A6.6 6.6 0 0 0 236 499.2Z" fill="#3aa757"/>
<path d="M239.2 493.4L236 499.2A6.6 6.6 0 0 0 245.8 493.4Z" fill="#f7c21c"/>
<path d="M239.2 493.4L233.5 490.1A6.6 6.6 0 0 0 235.9 499.1Z" fill="#34a04f"/>
<circle cx="239.2" cy="493.4" r="3" fill="#fff"/>
<circle cx="239.2" cy="493.4" r="2.3" fill="#3f7fe6"/>
<circle cx="243" cy="497.8" r="3.8" fill="#4a4a48"/>
<circle cx="243" cy="497.4" r="2" fill="#7d7568"/>
<!-- explorer -->
<path d="M259.6 490.2H264L265.2 491.6H272.4V499H259.6Z" fill="#f3b928"/>
<path d="M259.6 493H272.4V499H259.6Z" fill="#fad25a"/>
<path d="M262.4 495.6H269.6V499H262.4Z" fill="#3c8ede"/>
<path d="M264.6 497H267.4V499H264.6Z" fill="#fad25a"/>
<!-- steam -->
<circle cx="292" cy="493.6" r="6.8" fill="#13264a"/>
<circle cx="294.6" cy="491.6" r="2.3" fill="none" stroke="#e9eef6" stroke-width="1"/>
<path d="M285.6 494L290 496.2" stroke="#e9eef6" stroke-width="1.6"/>
<circle cx="290.4" cy="496.4" r="1.6" fill="#e9eef6"/>
<!-- telegram -->
<circle cx="318" cy="493.8" r="6.6" fill="#2a9fdc"/>
<path d="M313.8 493.8L321.6 490.4L320.4 497.6L317.8 495.8L316.6 497.2L316.4 495Z" fill="#fff"/>
<!-- whatsapp -->
<circle cx="344.6" cy="493.4" r="6" fill="#f3fbf3" stroke="#2fb546" stroke-width="1.5"/>
<path d="M339.2 500.2L340.4 496.6L342.8 498.6Z" fill="#2fb546"/>
<path d="M342.2 490.8C342 494 344.6 496.4 347.4 496.2L347.8 494.8L346.4 494L345.6 494.6C344.6 494.2 343.8 493.4 343.6 492.4L344.2 491.8L343.6 490.4Z" fill="#2fb546"/>
<!-- blank doc -->
<path d="M365.6 488.6H372.4L375.4 491.6V500H365.6Z" fill="#fdfdfd" stroke="#dcdcdc" stroke-width="0.5"/>
<path d="M372.4 488.6V491.6H375.4Z" fill="#e4e4e4"/>
<!-- avatar -->
<circle cx="397" cy="494" r="6.2" fill="#3e5a9a"/>
<circle cx="397" cy="493.4" r="4" fill="#e9dfcf"/>
<path d="M392.4 491C394 488.6 400 488.6 401.6 491C400 490 394 490 392.4 491Z" fill="#c23a2a"/>
<circle cx="395.6" cy="493" r="0.9" fill="#222"/><circle cx="398.6" cy="493" r="0.9" fill="#222"/>
<path d="M393 498C395 499.6 399 499.6 401 498" stroke="#8a5a2a" stroke-width="1.2" fill="none"/>
<!-- orange game -->
<rect x="416.2" y="487" width="14.8" height="14" fill="#e2943a"/>
<path d="M418 492C420 488.6 427 488.6 429.4 492V496H418Z" fill="#f1d6a0"/>
<path d="M417 497H430.4V500.4H417Z" fill="#7a3a1a"/>
<path d="M418.4 494H429M418.4 498.6H429.4" stroke="#3a1e10" stroke-width="1"/>
<circle cx="427.6" cy="489" r="1.6" fill="#f7f0e0"/>
<!-- sonic -->
<rect x="442.4" y="487" width="14.8" height="14" fill="#0c1626"/>
<path d="M445 499C444 493 447 488.6 452 488.4L455.6 492L452.6 493.6L456 497L452 496.6L453 500.6Z" fill="#2a6fd6"/>
<path d="M447 497C447.6 494.6 450 494 451.6 495.4C451 497.6 449 498.6 447 497Z" fill="#a6d4f2"/>
<!-- obs -->
<circle cx="475.6" cy="494" r="6.6" fill="#1c1c20"/>
<circle cx="475.6" cy="494" r="4.4" fill="none" stroke="#d8d8d8" stroke-width="1" stroke-dasharray="5.4 3.8"/>
<circle cx="475.6" cy="494" r="1.4" fill="#1c1c20"/>
<!-- calculator -->
<rect x="496.2" y="487" width="10.8" height="13.6" rx="0.8" fill="#8ea0b4"/>
<rect x="497.4" y="488.2" width="8.4" height="3.4" fill="#2f73c8"/>
<path d="M497.8 493.6H505.6M497.8 496H505.6M497.8 498.4H505.6" stroke="#e9eef4" stroke-width="1.3" stroke-dasharray="1.8 1.2"/>
<!-- davinci -->
<circle cx="528" cy="494.6" r="6.6" fill="#232634"/>
<circle cx="528" cy="491.2" r="2.6" fill="#e23a3a"/>
<circle cx="524.8" cy="496.6" r="2.6" fill="#3a6ee2"/>
<circle cx="531.2" cy="496.6" r="2.6" fill="#3ab84a"/>
<!-- minecraft -->
<path d="M548 490.4L555 487L562 490.4L555 493.8Z" fill="#5da23a"/>
<path d="M548 490.4L555 493.8V501L548 497.4Z" fill="#7a5234"/>
<path d="M562 490.4L555 493.8V501L562 497.4Z" fill="#5e3e26"/>
<path d="M548 490.4L555 493.8L562 490.4V492L555 495.4L548 492Z" fill="#4a8a2e"/>
<!-- plus circle -->
<circle cx="580.8" cy="494" r="6.4" fill="#9a9c9a"/>
<path d="M580.8 489V499M575.8 494H585.8" stroke="#1c1c1c" stroke-width="2.8"/>
<!-- eye -->
<rect x="600.6" y="487.2" width="13" height="13.2" fill="#fdfdfd" stroke="#d06a5a" stroke-width="0.9"/>
<path d="M602.4 493.8C604.4 490.4 610 490.4 612 493.8C610 497.2 604.4 497.2 602.4 493.8Z" fill="#e9f0fa" stroke="#2a55b8" stroke-width="1"/>
<circle cx="607.2" cy="493.8" r="1.7" fill="#2a55b8"/>
<path d="M603 498.8H611.4" stroke="#d06a5a" stroke-width="0.8"/>
<!-- dark/green icon -->
<rect x="626.2" y="487" width="13.8" height="13.6" fill="#222524"/>
<path d="M628.4 494.4L632 492.6L635 494.2L638.4 491.6" stroke="#f0f0f0" stroke-width="1.1" fill="none"/>
<path d="M629.4 498.6L631 496.6L632.6 498.6Z" fill="#7ad02a"/>
<!-- slash icon -->
<path d="M662.6 488.2L657 499.6" stroke="#26331f" stroke-width="1.5"/>
<path d="M656.6 491.4H661.6M655.4 494.4H663.6" stroke="#58b03a" stroke-width="1.2"/>
<path d="M664.6 489L660 495.6" stroke="#7ad02a" stroke-width="0.9"/>
<!-- fusion -->
<circle cx="685" cy="494" r="6.8" fill="#5a22a8"/>
<circle cx="685" cy="494" r="6.8" fill="url(#gApp)"/>
<circle cx="684.8" cy="493.8" r="3.4" fill="none" stroke="#e9dcf8" stroke-width="1.1"/>
<circle cx="684.8" cy="493.8" r="1.5" fill="#b8203a"/>
<path d="M680 490L689.6 497.6" stroke="#d8c2f4" stroke-width="0.6"/>
<!-- drop -->
<path d="M710.6 487.4C714.4 489.6 717.2 492.6 717 496A5.8 4.8 0 0 1 705.4 496C705.2 492.4 707.6 489.4 710.6 487.4Z" fill="url(#gDrop)"/>
<!-- capcut -->
<rect x="730.8" y="488" width="13" height="12" rx="2.4" fill="#fdfdfd"/>
<path d="M733.6 491.6H738.6L741.4 496.4M733.6 496.4H738.6L741.4 491.6M733.6 491.6V496.4" stroke="#111" stroke-width="1.5" fill="none"/>
</g>
<!-- tray -->
<path d="M755 496.2L758.6 492.4L762.2 496.2" fill="none" stroke="#222" stroke-width="0.9"/>
<g fill="none" stroke="#7a7a7a" stroke-width="0.8">
<path d="M769.8 497.4A6.4 6.4 0 0 1 776 491.4M771.6 497.4A4.4 4.4 0 0 1 776 493.2M773.4 497.4A2.6 2.6 0 0 1 776 495"/>
</g>
<circle cx="775.4" cy="497" r="0.7" fill="#7a7a7a"/>
<path d="M782.4 491.8V497.4M785.4 493.6V497.4M788.4 491.8V497.4M782.4 494.8H788.4" stroke="#1a1a1a" stroke-width="1" fill="none"/>
<circle cx="789.6" cy="491.2" r="1.4" fill="#e0402a"/>
<path d="M796.6 492.8H804.6M796.6 496H804.6" stroke="#1a1a1a" stroke-width="0.9"/>
<rect x="801.2" y="491.4" width="1.4" height="2.8" fill="#1a1a1a"/>
<rect x="798.2" y="494.6" width="1.4" height="2.8" fill="#1a1a1a"/>
<!-- notifications -->
<path d="M876.4 490.4H885.6V496.8H882.6V498.6L880.6 496.8H876.4Z" fill="#1a1a1a"/>
<path d="M878 492.4H884M878 494.4H884" stroke="#e9f0ea" stroke-width="0.7"/>
<path d="M883.2 497.2H885.6V498.6H883.2Z" fill="#1a1a1a"/>
</svg>

<!-- texts -->
<div class="t" style="left:12.5px;top:1.8px;height:10.5px;line-height:10.5px;font-size:7.5px;color:#505050;transform:scaleX(0.934);">Clickteam Fusion Developer 2.5+ - [ПНСЛ Ужасы Пня - Редкий кадр 1 (ночь 1)*]</div>
<div class="t" style="left:21.3px;top:15.6px;height:10.5px;line-height:10.5px;font-size:7.5px;color:#111;transform:scaleX(0.827);-webkit-text-stroke:0.25px #111;">File</div>
<div class="t" style="left:40.8px;top:15.6px;height:10.5px;line-height:10.5px;font-size:7.5px;color:#111;transform:scaleX(0.866);-webkit-text-stroke:0.25px #111;">Edit</div>
<div class="t" style="left:60.8px;top:15.6px;height:10.5px;line-height:10.5px;font-size:7.5px;color:#111;transform:scaleX(0.899);-webkit-text-stroke:0.25px #111;">View</div>
<div class="t" style="left:84.7px;top:15.6px;height:10.5px;line-height:10.5px;font-size:7.5px;color:#111;transform:scaleX(0.858);-webkit-text-stroke:0.25px #111;">Insert</div>
<div class="t" style="left:110.0px;top:15.6px;height:10.5px;line-height:10.5px;font-size:7.5px;color:#111;transform:scaleX(0.892);-webkit-text-stroke:0.25px #111;">Arrange</div>
<div class="t" style="left:143.0px;top:15.6px;height:10.5px;line-height:10.5px;font-size:7.5px;color:#111;transform:scaleX(0.814);-webkit-text-stroke:0.25px #111;">Text</div>
<div class="t" style="left:164.2px;top:15.6px;height:10.5px;line-height:10.5px;font-size:7.5px;color:#111;transform:scaleX(0.879);-webkit-text-stroke:0.25px #111;">Run</div>
<div class="t" style="left:185.0px;top:15.6px;height:10.5px;line-height:10.5px;font-size:7.5px;color:#111;transform:scaleX(0.885);-webkit-text-stroke:0.25px #111;">Tools</div>
<div class="t" style="left:210.3px;top:15.6px;height:10.5px;line-height:10.5px;font-size:7.5px;color:#111;transform:scaleX(0.970);-webkit-text-stroke:0.25px #111;">Window</div>
<div class="t" style="left:245.0px;top:15.6px;height:10.5px;line-height:10.5px;font-size:7.5px;color:#111;transform:scaleX(0.920);-webkit-text-stroke:0.25px #111;">Help</div>
<div class="t" style="left:309.7px;top:30.5px;height:10.5px;line-height:10.5px;font-size:7.5px;color:#333;transform:scaleX(0.865);">10 - Редкий кадр 1 (ноча</div>
<div class="t" style="left:8.7px;top:48.0px;height:10.5px;line-height:10.5px;font-size:7.5px;color:#333;transform:scaleX(0.839);">50%</div>
<div class="t" style="left:2.4px;top:61.2px;height:10.5px;line-height:10.5px;font-size:7.5px;color:#333;transform:scaleX(0.895);">Workspace Tool...</div>
<div class="t" style="left:-1.0px;top:73.0px;height:10.5px;line-height:10.5px;font-size:7.5px;color:#222;transform:scaleX(0.971);">обычные Приключен</div>
<div class="t" style="left:1.0px;top:83.5px;height:10.5px;line-height:10.5px;font-size:7.5px;color:#222;transform:scaleX(0.925);">СЛ Ужасы Пня *</div>
<div class="t" style="left:1.0px;top:94.0px;height:10.5px;line-height:10.5px;font-size:7.5px;color:#222;transform:scaleX(0.948);">Дисклеймер</div>
<div class="t" style="left:1.4px;top:104.5px;height:10.5px;line-height:10.5px;font-size:7.5px;color:#222;transform:scaleX(0.976);">Меню</div>
<div class="t" style="left:1.4px;top:115.0px;height:10.5px;line-height:10.5px;font-size:7.5px;color:#222;transform:scaleX(0.949);">Настройки</div>
<div class="t" style="left:1.4px;top:125.5px;height:10.5px;line-height:10.5px;font-size:7.5px;color:#222;transform:scaleX(0.958);">Мини-игра 1</div>
<div class="t" style="left:1.4px;top:136.0px;height:10.5px;line-height:10.5px;font-size:7.5px;color:#222;transform:scaleX(0.939);">Мини-игра 1 (У пня)</div>
<div class="t" style="left:1.4px;top:146.5px;height:10.5px;line-height:10.5px;font-size:7.5px;color:#222;transform:scaleX(0.935);">Мини-игра 1 (В пне)</div>
<div class="t" style="left:1.4px;top:157.0px;height:10.5px;line-height:10.5px;font-size:7.5px;color:#222;transform:scaleX(0.940);">Запуск Ночь 1</div>
<div class="t" style="left:1.4px;top:167.5px;height:10.5px;line-height:10.5px;font-size:7.5px;color:#222;transform:scaleX(0.927);">1 ночь</div>
<div class="t" style="left:1.4px;top:178.0px;height:10.5px;line-height:10.5px;font-size:7.5px;color:#222;transform:scaleX(0.927);">2 ночь</div>
<div class="t" style="left:1.4px;top:188.5px;height:10.5px;line-height:10.5px;font-size:7.5px;color:#222;transform:scaleX(0.909);">Редкий кадр 1 (ночь 1</div>
<div class="t" style="left:1.4px;top:199.0px;height:10.5px;line-height:10.5px;font-size:7.5px;color:#222;transform:scaleX(0.909);">Редкий кадр 2 (ночь 1</div>
<div class="t" style="left:1.4px;top:209.5px;height:10.5px;line-height:10.5px;font-size:7.5px;color:#222;transform:scaleX(0.909);">Редкий кадр 3 (ночь 1</div>
<div class="t" style="left:1.4px;top:220.0px;height:10.5px;line-height:10.5px;font-size:7.5px;color:#222;transform:scaleX(0.909);">Редкий кадр 4 (ночь 1</div>
<div class="t" style="left:1.4px;top:230.5px;height:10.5px;line-height:10.5px;font-size:7.5px;color:#222;transform:scaleX(0.945);">Игра Окончена</div>
<div class="t" style="left:1.4px;top:241.0px;height:10.5px;line-height:10.5px;font-size:7.5px;color:#222;transform:scaleX(0.938);">Игра Окончена 2</div>
<div class="t" style="left:95.5px;top:82.7px;height:10.5px;line-height:10.5px;font-size:7.5px;color:#333;transform:scaleX(0.905);">Active</div>
<div class="t" style="left:517.2px;top:59.8px;height:10.5px;line-height:10.5px;font-size:7.5px;color:#333;transform:scaleX(0.925);">Active</div>
<div class="t" style="left:2.4px;top:262.1px;height:10.5px;line-height:10.5px;font-size:7.5px;color:#333;transform:scaleX(0.863);">Properties - Ред...</div>
<div class="t" style="left:6.5px;top:292.0px;height:10.5px;line-height:10.5px;font-size:7.5px;color:#222;transform:scaleX(0.902);font-weight:bold;">Settings</div>
<div class="t" style="left:19.4px;top:303.4px;height:10.5px;line-height:10.5px;font-size:7.5px;color:#333;transform:scaleX(0.954);">Don&#x27;t include a</div>
<div class="t" style="left:6.5px;top:314.6px;height:10.5px;line-height:10.5px;font-size:7.5px;color:#333;transform:scaleX(0.822);">Size</div>
<div class="t" style="left:53.4px;top:314.6px;height:10.5px;line-height:10.5px;font-size:7.5px;color:#222;transform:scaleX(0.872);font-weight:bold;">128(</div>
<div class="t" style="left:6.5px;top:325.4px;height:10.5px;line-height:10.5px;font-size:7.5px;color:#333;transform:scaleX(0.944);">Virtual Width</div>
<div class="t" style="left:53.4px;top:325.4px;height:10.5px;line-height:10.5px;font-size:7.5px;color:#222;transform:scaleX(0.872);font-weight:bold;">128(</div>
<div class="t" style="left:6.5px;top:336.6px;height:10.5px;line-height:10.5px;font-size:7.5px;color:#333;transform:scaleX(0.958);">Virtual Height</div>
<div class="t" style="left:53.4px;top:336.6px;height:10.5px;line-height:10.5px;font-size:7.5px;color:#222;transform:scaleX(0.895);font-weight:bold;">720</div>
<div class="t" style="left:6.5px;top:347.5px;height:10.5px;line-height:10.5px;font-size:7.5px;color:#333;transform:scaleX(0.948);">Background c</div>
<div class="t" style="left:63.2px;top:347.5px;height:10.5px;line-height:10.5px;font-size:7.5px;color:#222;transform:scaleX(0.609);font-weight:bold;">R</div>
<div class="t" style="left:6.5px;top:358.8px;height:10.5px;line-height:10.5px;font-size:7.5px;color:#333;transform:scaleX(0.899);">Palette</div>
<div class="t" style="left:54.2px;top:358.8px;height:10.5px;line-height:10.5px;font-size:7.5px;color:#444;transform:scaleX(0.873);">Edit</div>
<div class="t" style="left:6.7px;top:368.7px;height:10.5px;line-height:10.5px;font-size:7.5px;color:#1f7ad1;transform:scaleX(0.860);font-weight:bold;">Transitions</div>
<div class="t" style="left:6.5px;top:378.2px;height:10.5px;line-height:10.5px;font-size:7.5px;color:#333;transform:scaleX(0.865);">Fade In</div>
<div class="t" style="left:53.4px;top:378.2px;height:10.5px;line-height:10.5px;font-size:7.5px;color:#222;transform:scaleX(0.863);font-weight:bold;">Non</div>
<div class="t" style="left:6.5px;top:389.0px;height:10.5px;line-height:10.5px;font-size:7.5px;color:#333;transform:scaleX(0.879);">Fade Out</div>
<div class="t" style="left:53.4px;top:389.0px;height:10.5px;line-height:10.5px;font-size:7.5px;color:#222;transform:scaleX(0.863);font-weight:bold;">Non</div>
<div class="t" style="left:6.7px;top:399.2px;height:10.5px;line-height:10.5px;font-size:7.5px;color:#1f7ad1;transform:scaleX(0.926);font-weight:bold;">Effect</div>
<div class="t" style="left:6.5px;top:408.6px;height:10.5px;line-height:10.5px;font-size:7.5px;color:#333;transform:scaleX(0.893);">Effect</div>
<div class="t" style="left:53.4px;top:408.6px;height:10.5px;line-height:10.5px;font-size:7.5px;color:#222;transform:scaleX(0.863);font-weight:bold;">Non</div>
<div class="t" style="left:3.9px;top:417.6px;height:10.5px;line-height:10.5px;font-size:7.5px;color:#111;transform:scaleX(0.951);font-weight:bold;">No Item Selected</div>
<div class="t" style="left:3.9px;top:426.5px;height:10.5px;line-height:10.5px;font-size:7.5px;color:#333;transform:scaleX(0.909);">Select an item to see</div>
<div class="t" style="left:3.9px;top:434.9px;height:10.5px;line-height:10.5px;font-size:7.5px;color:#333;transform:scaleX(0.944);">its description</div>
<div class="t" style="left:19.2px;top:460.6px;height:10.5px;line-height:10.5px;font-size:7.5px;color:#909090;transform:scaleX(0.895);">Library Toolbar</div>
<div class="t" style="left:818.8px;top:61.3px;height:10.5px;line-height:10.5px;font-size:7.5px;color:#333;transform:scaleX(0.860);">Layers Toolbar</div>
<div class="t" style="left:826.5px;top:93.2px;height:10.5px;line-height:10.5px;font-size:7.5px;color:#fff;transform:scaleX(0.599);">1</div>
<div class="t" style="left:880.0px;top:102.5px;height:10.5px;line-height:10.5px;font-size:7.5px;color:#fff;transform:scaleX(0.599);">1</div>
<div class="t" style="left:781.2px;top:472.9px;height:10.5px;line-height:10.5px;font-size:7.5px;color:#333;transform:scaleX(0.842);">230, 768</div>
<div class="t" style="left:823.6px;top:472.6px;height:10.5px;line-height:10.5px;font-size:7.5px;color:#333;transform:scaleX(0.767);">0</div>
<div class="t" style="left:868.9px;top:472.6px;height:10.5px;line-height:10.5px;font-size:7.5px;color:#a8a8a8;transform:scaleX(0.804);">CAP</div>
<div class="t" style="left:883.6px;top:472.6px;height:10.5px;line-height:10.5px;font-size:7.5px;color:#a0a0a0;transform:scaleX(0.901);">NUM</div>
<div class="t" style="left:52.0px;top:488.2px;height:12.5px;line-height:12.5px;font-size:9.5px;color:#484848;transform:scaleX(0.950);">Поиск</div>
<div class="t" style="left:812.0px;top:489.9px;height:10.5px;line-height:10.5px;font-size:7.5px;color:#333;transform:scaleX(0.745);">РУС</div>
<div class="t" style="left:841.0px;top:484.4px;height:10.5px;line-height:10.5px;font-size:7.5px;color:#333;transform:scaleX(0.820);">20:52</div>
<div class="t" style="left:832.4px;top:494.9px;height:10.5px;line-height:10.5px;font-size:7.5px;color:#333;transform:scaleX(0.876);">21.04.2026</div>
</div>
</body></html>
